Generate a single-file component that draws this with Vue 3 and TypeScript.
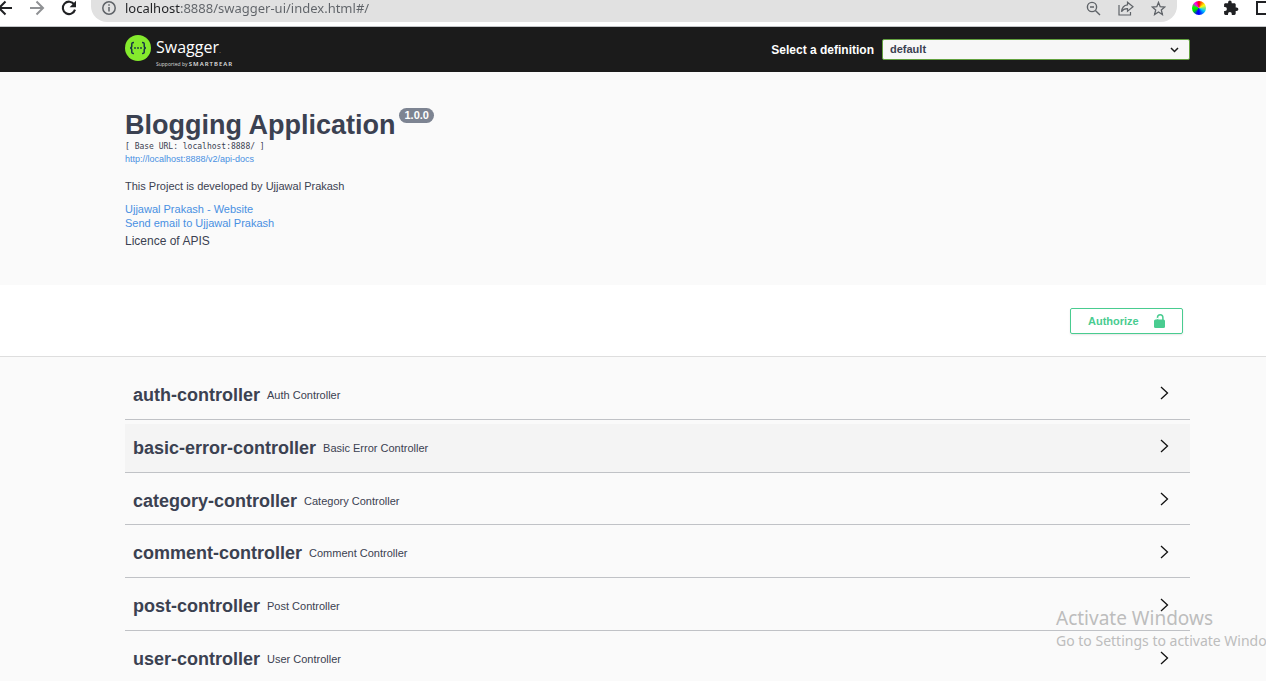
<script setup lang="ts">
import { ref } from 'vue'

interface Controller {
  name: string
  description: string
}

const controllers: Controller[] = [
  { name: 'auth-controller', description: 'Auth Controller' },
  { name: 'basic-error-controller', description: 'Basic Error Controller' },
  { name: 'category-controller', description: 'Category Controller' },
  { name: 'comment-controller', description: 'Comment Controller' },
  { name: 'post-controller', description: 'Post Controller' },
  { name: 'user-controller', description: 'User Controller' },
]

const active = ref('basic-error-controller')
const definition = ref('default')
const address = ref('localhost:8888/swagger-ui/index.html#/')
</script>

<template>
  <div class="window">
    <header class="browser">
      <div class="nav">
        <button type="button" aria-label="Back">
          <svg width="16" height="16" viewBox="0 0 16 16" fill="none" stroke="#202124" stroke-width="2"><path d="M15 8H2M8.500 1.500 2 8l6.500 6.500" /></svg>
        </button>
        <button type="button" aria-label="Forward">
          <svg width="16" height="16" viewBox="0 0 16 16" fill="none" stroke="#8f9194" stroke-width="2"><path d="M1 8h13M7.500 1.500 14 8l-6.500 6.500" /></svg>
        </button>
        <button type="button" aria-label="Reload">
          <svg width="16" height="16" viewBox="0 0 16 16"><path d="M13.200 4.400A6.200 6.200 0 1 0 14 9.600" fill="none" stroke="#202124" stroke-width="2.100" /><path d="M15 .8v6.400H8.600z" fill="#202124" /></svg>
        </button>
      </div>
      <div class="omnibox">
        <svg width="14" height="14" viewBox="0 0 14 14" fill="none" stroke="#5f6368" stroke-width="1.500"><circle cx="7" cy="7" r="6.200" /><path d="M7 6v4.500M7 3.200v1.600" /></svg>
        <input v-model="address" class="address" type="text" aria-label="Address" />
        <button type="button" aria-label="Zoom">
          <svg width="15" height="15" viewBox="0 0 15 15" fill="none" stroke="#5f6368" stroke-width="1.400"><circle cx="6" cy="6" r="4.600" /><path d="M9.400 9.400 14 14M4 6h4" /></svg>
        </button>
        <button type="button" aria-label="Share">
          <svg width="16" height="15" viewBox="0 0 16 15" fill="none" stroke="#5f6368" stroke-width="1.200"><path d="M1 4v10h11.500v-3M9.500 1.200 15 5.800l-5.500 4.400V7.700C6.500 7.600 4.800 8.600 3.500 10.800 3.800 7 6 4.200 9.500 3.800z" /></svg>
        </button>
        <button type="button" aria-label="Bookmark">
          <svg width="15" height="15" viewBox="0 0 15 15" fill="none" stroke="#5f6368" stroke-width="1.300"><path d="m7.500 1.400 1.700 4.300 4.600.3-3.500 3 1.100 4.500-3.900-2.500-3.900 2.500 1.100-4.500-3.500-3 4.600-.3z" /></svg>
        </button>
      </div>
      <div class="extensions">
        <button type="button" aria-label="Color wheel"><span class="wheel"></span></button>
        <button type="button" aria-label="Extensions">
          <svg width="16" height="16" viewBox="0 0 16 16" fill="#202124"><path d="M13.600 7.400h-.9V4.600c0-.7-.6-1.300-1.300-1.300H8.700v-.9a1.800 1.800 0 0 0-3.600 0v.9H2.400c-.7 0-1.300.6-1.300 1.300v2.500H2a1.900 1.900 0 0 1 0 3.800h-.9v2.700c0 .7.600 1.300 1.300 1.300H5V14a1.900 1.900 0 0 1 3.800 0v.9h2.600c.7 0 1.300-.6 1.300-1.300V11h.9a1.800 1.800 0 0 0 0-3.600z" /></svg>
        </button>
        <button type="button" aria-label="Side panel">
          <svg width="16" height="16" viewBox="0 0 16 16" fill="none" stroke="#202124" stroke-width="2"><path d="M2 2h13v12H2z" /></svg>
        </button>
      </div>
    </header>

    <div class="topbar">
      <a class="brand" href="#/">
        <svg width="26" height="26" viewBox="0 0 26 26">
          <circle cx="13" cy="13" r="13" fill="#85ea2d" />
          <path d="M9 7.500c-2.400 0-2.300.8-2.200 3 .1 1.600-.3 2.300-1.600 2.500 1.300.2 1.700 1 1.600 2.500-.1 2.200-.2 3 2.200 3M17 7.500c2.400 0 2.300.8 2.200 3-.1 1.600.3 2.300 1.600 2.500-1.300.2-1.700 1-1.600 2.500.1 2.200.2 3-2.200 3" fill="none" stroke="#173647" stroke-width="1.500" />
          <g fill="#173647"><circle cx="10" cy="13" r=".9" /><circle cx="13" cy="13" r=".9" /><circle cx="16" cy="13" r=".9" /></g>
        </svg>
        <span class="brand-text">
          <span class="brand-name">Swagger<span class="mark">.</span></span>
          <span class="brand-by">Supported by <b>SMARTBEAR</b></span>
        </span>
      </a>
      <form class="definition" @submit.prevent>
        <label for="definition">Select a definition</label>
        <span class="select-wrap">
          <select id="definition" v-model="definition">
            <option value="default">default</option>
          </select>
          <svg width="9" height="6" viewBox="0 0 9 6" fill="none" stroke="#1b1b1b" stroke-width="1.500"><path d="m1 1 3.500 3.500L8 1" /></svg>
        </span>
      </form>
    </div>

    <main>
      <section class="info">
        <h1>Blogging Application<span class="version">1.0.0</span></h1>
        <pre class="base">[ Base URL: localhost:8888/ ]</pre>
        <a class="docs" href="http://localhost:8888/v2/api-docs">http://localhost:8888/v2/api-docs</a>
        <p class="about">This Project is developed by Ujjawal Prakash</p>
        <a class="contact" href="#website">Ujjawal Prakash - Website</a>
        <a class="contact" href="#email">Send email to Ujjawal Prakash</a>
        <p class="licence">Licence of APIS</p>
      </section>

      <section class="scheme">
        <button class="authorize" type="button">
          <span>Authorize</span>
          <svg width="12" height="14" viewBox="0 0 12 14"><path d="M3.500 6V3.600C3.500 2 4.600.8 6.200.8s2.700 1.200 2.700 2.800V6" fill="none" stroke="#49cc90" stroke-width="1.500" /><path d="M2.500 3.900h2v1.400h-2z" fill="#fff" /><rect x="0" y="5.500" width="11" height="8.500" rx="1.500" fill="#49cc90" /></svg>
        </button>
      </section>

      <section class="controllers">
        <div v-for="item in controllers" :key="item.name" class="row" :class="{ active: item.name === active }" @mouseenter="active = item.name">
          <h2><a :href="'#/' + item.name">{{ item.name }}</a></h2>
          <p>{{ item.description }}</p>
          <button type="button" :aria-label="'Expand ' + item.name">
            <svg width="9" height="14" viewBox="0 0 9 14" fill="none" stroke="#111" stroke-width="1.300"><path d="m1 1 6.500 6L1 13" /></svg>
          </button>
        </div>
      </section>
    </main>

    <aside class="watermark">
      <p class="watermark-title">Activate Windows</p>
      <p class="watermark-text">Go to Settings to activate Windows.</p>
    </aside>
  </div>
</template>

<style>
body {
  margin: 0;
  overflow: hidden;
  background: #fafafa;
}
</style>

<style scoped>
.window {
  --gutter-left: 125px;
  --gutter-right: 76px;
  position: relative;
  height: 100vh;
  overflow: hidden;
  color: #3b4151;
  font-family: "Liberation Sans", Arial, sans-serif;
}
* {
  box-sizing: border-box;
}
h1,
h2,
p,
pre {
  margin: 0;
}
a {
  color: #4990e2;
  text-decoration: none;
}
button {
  display: flex;
  align-items: center;
  padding: 0;
  border: 0;
  background: none;
}
svg {
  flex: none;
}

.browser {
  display: flex;
  height: 27px;
  background: #fff;
  border-bottom: 1px solid #c4c6c9;
}
.nav {
  display: flex;
  gap: 16px;
  height: 16px;
  margin-left: -3px;
}
.omnibox {
  display: flex;
  flex: 1;
  align-items: center;
  gap: 17px;
  height: 22px;
  margin-left: 14px;
  padding: 0 11px 6px;
  background: #e1e1e1;
  border-radius: 0 0 16px 16px;
}
.address {
  flex: 1;
  min-width: 0;
  height: 20px;
  margin-left: -8px;
  padding: 0;
  border: 0;
  outline: 0;
  /* The host part of the address is darker than the rest. */
  background: linear-gradient(to right, #202124 56px, #5f6368 56px);
  background-clip: text;
  color: transparent;
  caret-color: #202124;
  font: 13px/20px "Noto Sans", "Open Sans", sans-serif;
}
.extensions {
  display: flex;
  gap: 16px;
  height: 16px;
  margin: 0 -5px 0 14px;
}
.wheel {
  width: 14px;
  height: 14px;
  margin: 0 1px;
  border-radius: 50%;
  background: conic-gradient(#f00, #f80 30deg, #ff0 60deg, #0cf 120deg, #00f 180deg, #00f 200deg, #0d0 240deg, #0f0 280deg, #f0f 320deg, #f00);
}

.topbar {
  display: flex;
  align-items: center;
  justify-content: space-between;
  height: 45px;
  padding: 0 var(--gutter-right) 0 var(--gutter-left);
  background: #1b1b1b;
}
.brand {
  display: flex;
  gap: 5px;
  padding-top: 2px;
  color: #fff;
  font-family: "Open Sans", "Noto Sans", sans-serif;
}
.brand-text {
  display: flex;
  flex-direction: column;
}
.brand-name {
  font-size: 16px;
  line-height: 24px;
}
.mark {
  color: #777;
  font-size: 8px;
}
.brand-by {
  color: #ddd;
  font-size: 5px;
  line-height: 5px;
}
.brand-by b {
  font-family: "Noto Sans", sans-serif;
  font-size: 6px;
  font-weight: 600;
  letter-spacing: 1px;
}
.definition {
  display: flex;
  align-items: center;
  gap: 8px;
}
.definition label {
  color: #fff;
  font-size: 12px;
  font-weight: bold;
}
.select-wrap {
  display: grid;
  align-items: center;
  width: 308px;
}
.select-wrap > * {
  grid-area: 1 / 1;
}
.select-wrap svg {
  justify-self: end;
  margin-right: 11px;
  pointer-events: none;
}
select {
  width: 100%;
  height: 21px;
  padding: 0 7px 2px;
  appearance: none;
  border: 1px solid #62a03f;
  border-radius: 2px;
  background: #f7f7f7;
  color: #3b4151;
  font: bold 11px "Liberation Sans", Arial, sans-serif;
}

.info {
  display: flex;
  flex-direction: column;
  align-items: flex-start;
  height: 213px;
  padding: 36px var(--gutter-right) 0 var(--gutter-left);
}
h1 {
  display: flex;
  align-items: flex-start;
  gap: 4px;
  font-size: 27px;
  line-height: 34px;
}
.version {
  padding: 0 5px;
  border-radius: 8px;
  background: #7d8492;
  color: #fff;
  font-size: 11px;
  line-height: 15px;
}
.base {
  font: 8px/10px "DejaVu Sans Mono", monospace;
}
.docs {
  font-size: 9px;
  line-height: 14px;
}
.about {
  margin: 13px 0 9px;
  font-size: 11px;
  line-height: 14px;
}
.contact {
  font-size: 11px;
  line-height: 14px;
}
.licence {
  margin-top: 4px;
  font-size: 12px;
  line-height: 14px;
}

.scheme {
  display: flex;
  align-items: center;
  justify-content: flex-end;
  height: 72px;
  padding: 0 83px 0 var(--gutter-left);
  background: #fff;
  border-bottom: 1px solid #dedede;
}
.authorize {
  justify-content: space-between;
  width: 113px;
  height: 26px;
  padding: 0 16px 0 17px;
  border: 1px solid #49cc90;
  border-radius: 2px;
  box-shadow: 0 1px 2px rgba(0, 0, 0, 0.1);
  color: #49cc90;
  font: bold 11px "Liberation Sans", Arial, sans-serif;
}

.controllers {
  display: grid;
  grid-auto-rows: 1fr;
  gap: 4px;
  height: 327px;
  padding: 14px var(--gutter-right) 0 var(--gutter-left);
}
.row {
  display: flex;
  align-items: center;
  padding: 0 21px 0 8px;
  border-bottom: 1px solid #c0c2c6;
}
.row.active {
  background: #f4f4f4;
}
.row h2 {
  font-size: 18px;
  line-height: 24px;
}
.row h2 a {
  color: inherit;
}
.row p {
  flex: 1;
  padding-left: 7px;
  font-size: 11px;
}
.row button {
  padding-bottom: 3px;
}

.watermark {
  position: absolute;
  top: 605px;
  left: 1056px;
  color: #bdbdbd;
  font-family: "Noto Sans", "Open Sans", sans-serif;
  white-space: nowrap;
  pointer-events: none;
}
.watermark-title {
  font-size: 19px;
  line-height: 26px;
}
.watermark-text {
  font-size: 14px;
  line-height: 20px;
}
</style>
